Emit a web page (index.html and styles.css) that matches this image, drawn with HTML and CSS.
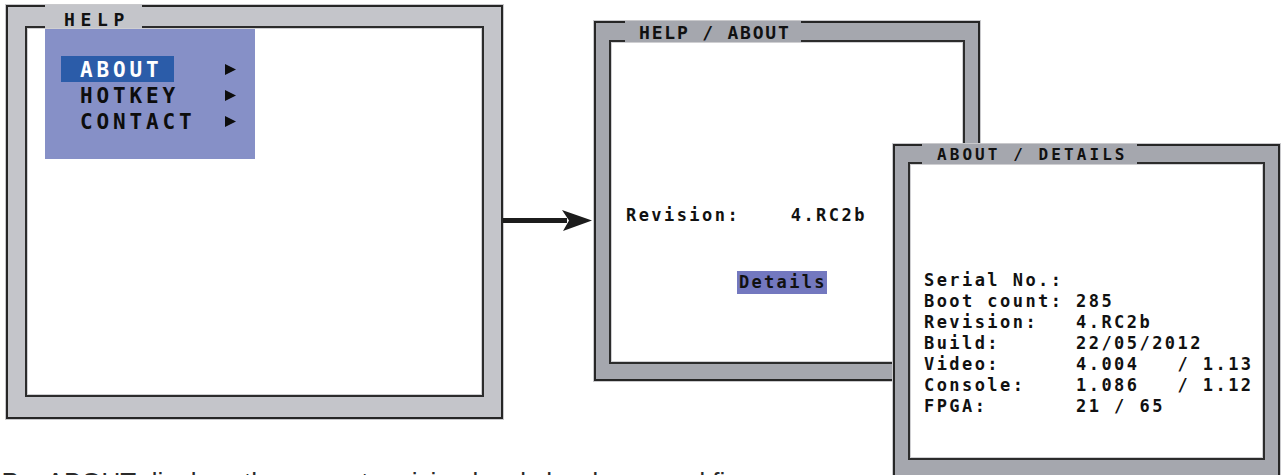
FILE: index.html
```html
<!DOCTYPE html>
<html lang="en">
<head>
<meta charset="utf-8">
<title>Help / About</title>
<link rel="stylesheet" href="styles.css">
</head>
<body>
<div class="diagram">
  <section class="frame frame-help">
    <div class="tab tab-help">HELP</div>
    <div class="screen">
      <div class="menu">
        <div class="row"><span class="label active">ABOUT</span><svg class="tri" viewBox="0 0 11 11"><polygon points="0,0 11,5.5 0,11"/></svg></div>
        <div class="row"><span class="label">HOTKEY</span><svg class="tri" viewBox="0 0 11 11"><polygon points="0,0 11,5.5 0,11"/></svg></div>
        <div class="row"><span class="label">CONTACT</span><svg class="tri" viewBox="0 0 11 11"><polygon points="0,0 11,5.5 0,11"/></svg></div>
      </div>
    </div>
  </section>

  <svg class="arrow" viewBox="0 0 90 25" width="90" height="25">
    <rect x="0" y="10" width="64" height="5" fill="#1c1c1c"/>
    <polygon points="59,2 89,12.5 60,23 66,12.5" fill="#1c1c1c"/>
  </svg>

  <section class="frame frame-about">
    <div class="tab tab-about">HELP / ABOUT</div>
    <div class="screen screen-about">
      <div class="mono revision">Revision:    4.RC2b</div>
      <div class="details-wrap"><span class="mono details">Details</span></div>
    </div>
  </section>

  <section class="frame frame-details">
    <div class="tab tab-details">ABOUT / DETAILS</div>
    <div class="screen screen-details">
<pre class="mono info">Serial No.:
Boot count: 285
Revision:   4.RC2b
Build:      22/05/2012
Video:      4.004   / 1.13
Console:    1.086   / 1.12
FPGA:       21 / 65</pre>
    </div>
  </section>
</div>
<p class="caption">HELP &gt; ABOUT displays the current revision levels hardware and firmware</p>
</body>
</html>
```

FILE: styles.css
```css
html, body {
  margin: 0;
  padding: 0;
  overflow: hidden;
  background: #ffffff;
}

body {
  width: 1282px;
  height: 475px;
  font-family: "DejaVu Sans Mono", monospace;
  color: #111111;
}

.diagram {
  position: relative;
  height: 467px;
}

/* ---------- window frames ---------- */
.frame {
  position: absolute;
  box-sizing: border-box;
  border: 2px solid #262626;
  box-shadow: 0 0 0 1px #c9c9cc;
  display: flex;
}

.frame-help {
  left: 6px;
  top: 5px;
  width: 497px;
  height: 414px;
  padding: 19px 17px 20px 17px;
  background: #c4c5ca;
}

.frame-about {
  left: 594px;
  top: 21px;
  width: 386px;
  height: 360px;
  padding: 17px 13px 15px 13px;
  background: #a5a7ae;
}

.frame-details {
  left: 893px;
  top: 144px;
  width: 387px;
  height: 337px;
  padding: 16px 13px 19px 13px;
  background: #a5a7ae;
}

.screen {
  flex: 1;
  box-sizing: border-box;
  border: 2px solid #2c2c2c;
  box-shadow: inset 0 0 0 1px #cfcfd2;
  background: #ffffff;
}

/* ---------- title tabs ---------- */
.tab {
  position: absolute;
  top: -2px;
  box-sizing: border-box;
  font-weight: bold;
  white-space: pre;
  color: #111111;
}

.frame-help .tab { background: #c4c5ca; }
.frame-about .tab,
.frame-details .tab { background: #a5a7ae; }

.tab-help {
  left: 37px;
  width: 97px;
  height: 23px;
  padding: 5px 0 0 19px;
  font-size: 18px;
  line-height: 19px;
  letter-spacing: 5.7px;
}

.tab-about {
  left: 29px;
  width: 176px;
  height: 21px;
  padding: 2px 0 0 14px;
  font-size: 18px;
  line-height: 19px;
  letter-spacing: 1.8px;
}

.tab-details {
  left: 27px;
  width: 215px;
  height: 20px;
  padding: 2px 0 0 15px;
  font-size: 16px;
  line-height: 18px;
  letter-spacing: 3.07px;
}

/* ---------- help menu ---------- */
.menu {
  box-sizing: border-box;
  width: 210px;
  height: 130px;
  margin: 1px 0 0 18px;
  padding-top: 27px;
  background: #8690c7;
}

.row {
  display: flex;
  align-items: center;
  height: 26px;
}

.label {
  box-sizing: border-box;
  width: 113px;
  height: 26px;
  margin-left: 16px;
  padding: 3px 0 0 19px;
  font-size: 21px;
  line-height: 23px;
  font-weight: bold;
  letter-spacing: 3.86px;
  color: #0d0d0d;
  white-space: nowrap;
}

.label.active {
  background: #2b5ca9;
  color: #ffffff;
}

.tri {
  width: 11px;
  height: 11px;
  margin-left: 51px;
  fill: #0d0d0d;
}

/* ---------- arrow ---------- */
.arrow {
  position: absolute;
  left: 503px;
  top: 208px;
}

/* ---------- mono screen text ---------- */
.mono {
  font-family: "DejaVu Sans Mono", monospace;
  font-weight: bold;
  font-size: 17px;
  letter-spacing: 2.44px;
  line-height: 21px;
  white-space: pre;
  color: #111111;
}

.screen-about {
  padding: 163px 0 0 15px;
}

.details-wrap {
  margin: 45px 0 0 111px;
}

.details {
  display: inline-block;
  height: 23px;
  padding-left: 2px;
  line-height: 23px;
  letter-spacing: 2.3px;
  background: #7378bf;
}

.screen-details {
  padding: 106px 0 0 14px;
}

.info {
  margin: 0;
}

/* ---------- caption ---------- */
.caption {
  margin: 0 0 0 -49px;
  font-family: "Liberation Sans", Arial, sans-serif;
  font-size: 26px;
  line-height: 30px;
  color: #2a2a2a;
  white-space: nowrap;
}
```
